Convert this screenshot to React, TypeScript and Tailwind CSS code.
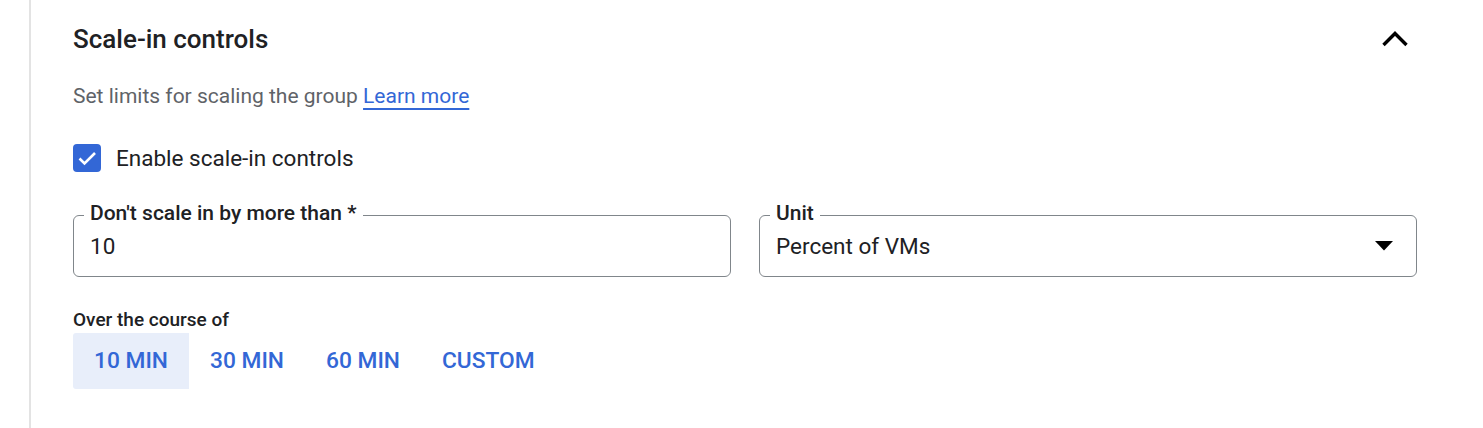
import React, {useState} from "react";

const BLUE = "text-[#3367d6]";

const ChevronUp = () => (
    <svg width="28" height="18" viewBox="0 0 28 18" className="mr-[8px]">
        <polyline points="2.5,15 14,3.5 25.5,15" fill="none" stroke="#000" strokeWidth="3.4"/>
    </svg>
);

const Field = ({label, children}: { label: string, children: React.ReactNode }) => (
    <div className="relative h-[62px] rounded-[6px] border border-[#80868b] flex items-center pl-[16px] pr-[23px]">
        <span
            className="absolute left-[10px] top-[-13px] bg-white px-[6px] text-[21px] leading-[20px] font-medium text-[#202124]">
            {label}
        </span>
        {children}
    </div>
);

const App = () => {
    const [enabled, setEnabled] = useState(true);
    const [period, setPeriod] = useState('10 MIN');
    const periods = ['10 MIN', '30 MIN', '60 MIN', 'CUSTOM'];

    return (
        <div className="h-[428px] w-full bg-white pl-[29px] font-['Roboto',sans-serif] overflow-hidden">
            <div className="h-full border-l-2 border-[#e3e3e3] pl-[42px] pr-[66px]">
                <div className="flex items-center justify-between pt-[23px]">
                    <h2 className="text-[26px] leading-[32px] font-medium text-[#202124]">Scale-in controls</h2>
                    <ChevronUp/>
                </div>

                <p className="mt-[27px] text-[21px] leading-[28px] text-[#5f6368]">
                    Set limits for scaling the group{" "}
                    <a href="#" className={`${BLUE} underline underline-offset-[5px] decoration-[1.5px]`}>Learn more</a>
                </p>

                <label className="mt-[34px] flex items-center gap-[15px] cursor-pointer">
                    <span
                        onClick={() => setEnabled(!enabled)}
                        className={`w-[28px] h-[28px] rounded-[4px] flex items-center justify-center ${enabled ? 'bg-[#3367d6]' : 'border-2 border-[#5f6368]'}`}>
                        {enabled && (
                            <svg width="28" height="28" viewBox="0 0 28 28">
                                <polyline points="6.5,14.5 11.5,19.5 22,9" fill="none" stroke="#fff" strokeWidth="2.6"/>
                            </svg>
                        )}
                    </span>
                    <span className="text-[22.5px] leading-[28px] text-[#202124] -mt-[1px]">Enable scale-in controls</span>
                </label>

                <div className="mt-[43px] grid grid-cols-2 gap-[28px]">
                    <Field label="Don't scale in by more than *">
                        <span className="text-[22.5px] leading-[28px] text-[#202124] -mt-[1px]">10</span>
                    </Field>
                    <Field label="Unit">
                        <span className="flex-1 text-[22.5px] leading-[28px] text-[#202124] -mt-[1px]">Percent of VMs</span>
                        <svg width="18" height="10" viewBox="0 0 18 10">
                            <polygon points="0,0 18,0 9,9.5" fill="#000"/>
                        </svg>
                    </Field>
                </div>

                <div className="mt-[32px] text-[19px] leading-[22px] font-medium text-[#202124]">Over the course of</div>
                <div className="mt-[2px] flex">
                    {periods.map(p => (
                        <button
                            key={p}
                            onClick={() => setPeriod(p)}
                            className={`h-[56px] px-[21px] text-[22.75px] font-medium ${BLUE} ${period === p ? 'bg-[#e8eefa] rounded-l-[3px]' : ''}`}>
                            {p}
                        </button>
                    ))}
                </div>
            </div>
        </div>
    );
};

export default App;
